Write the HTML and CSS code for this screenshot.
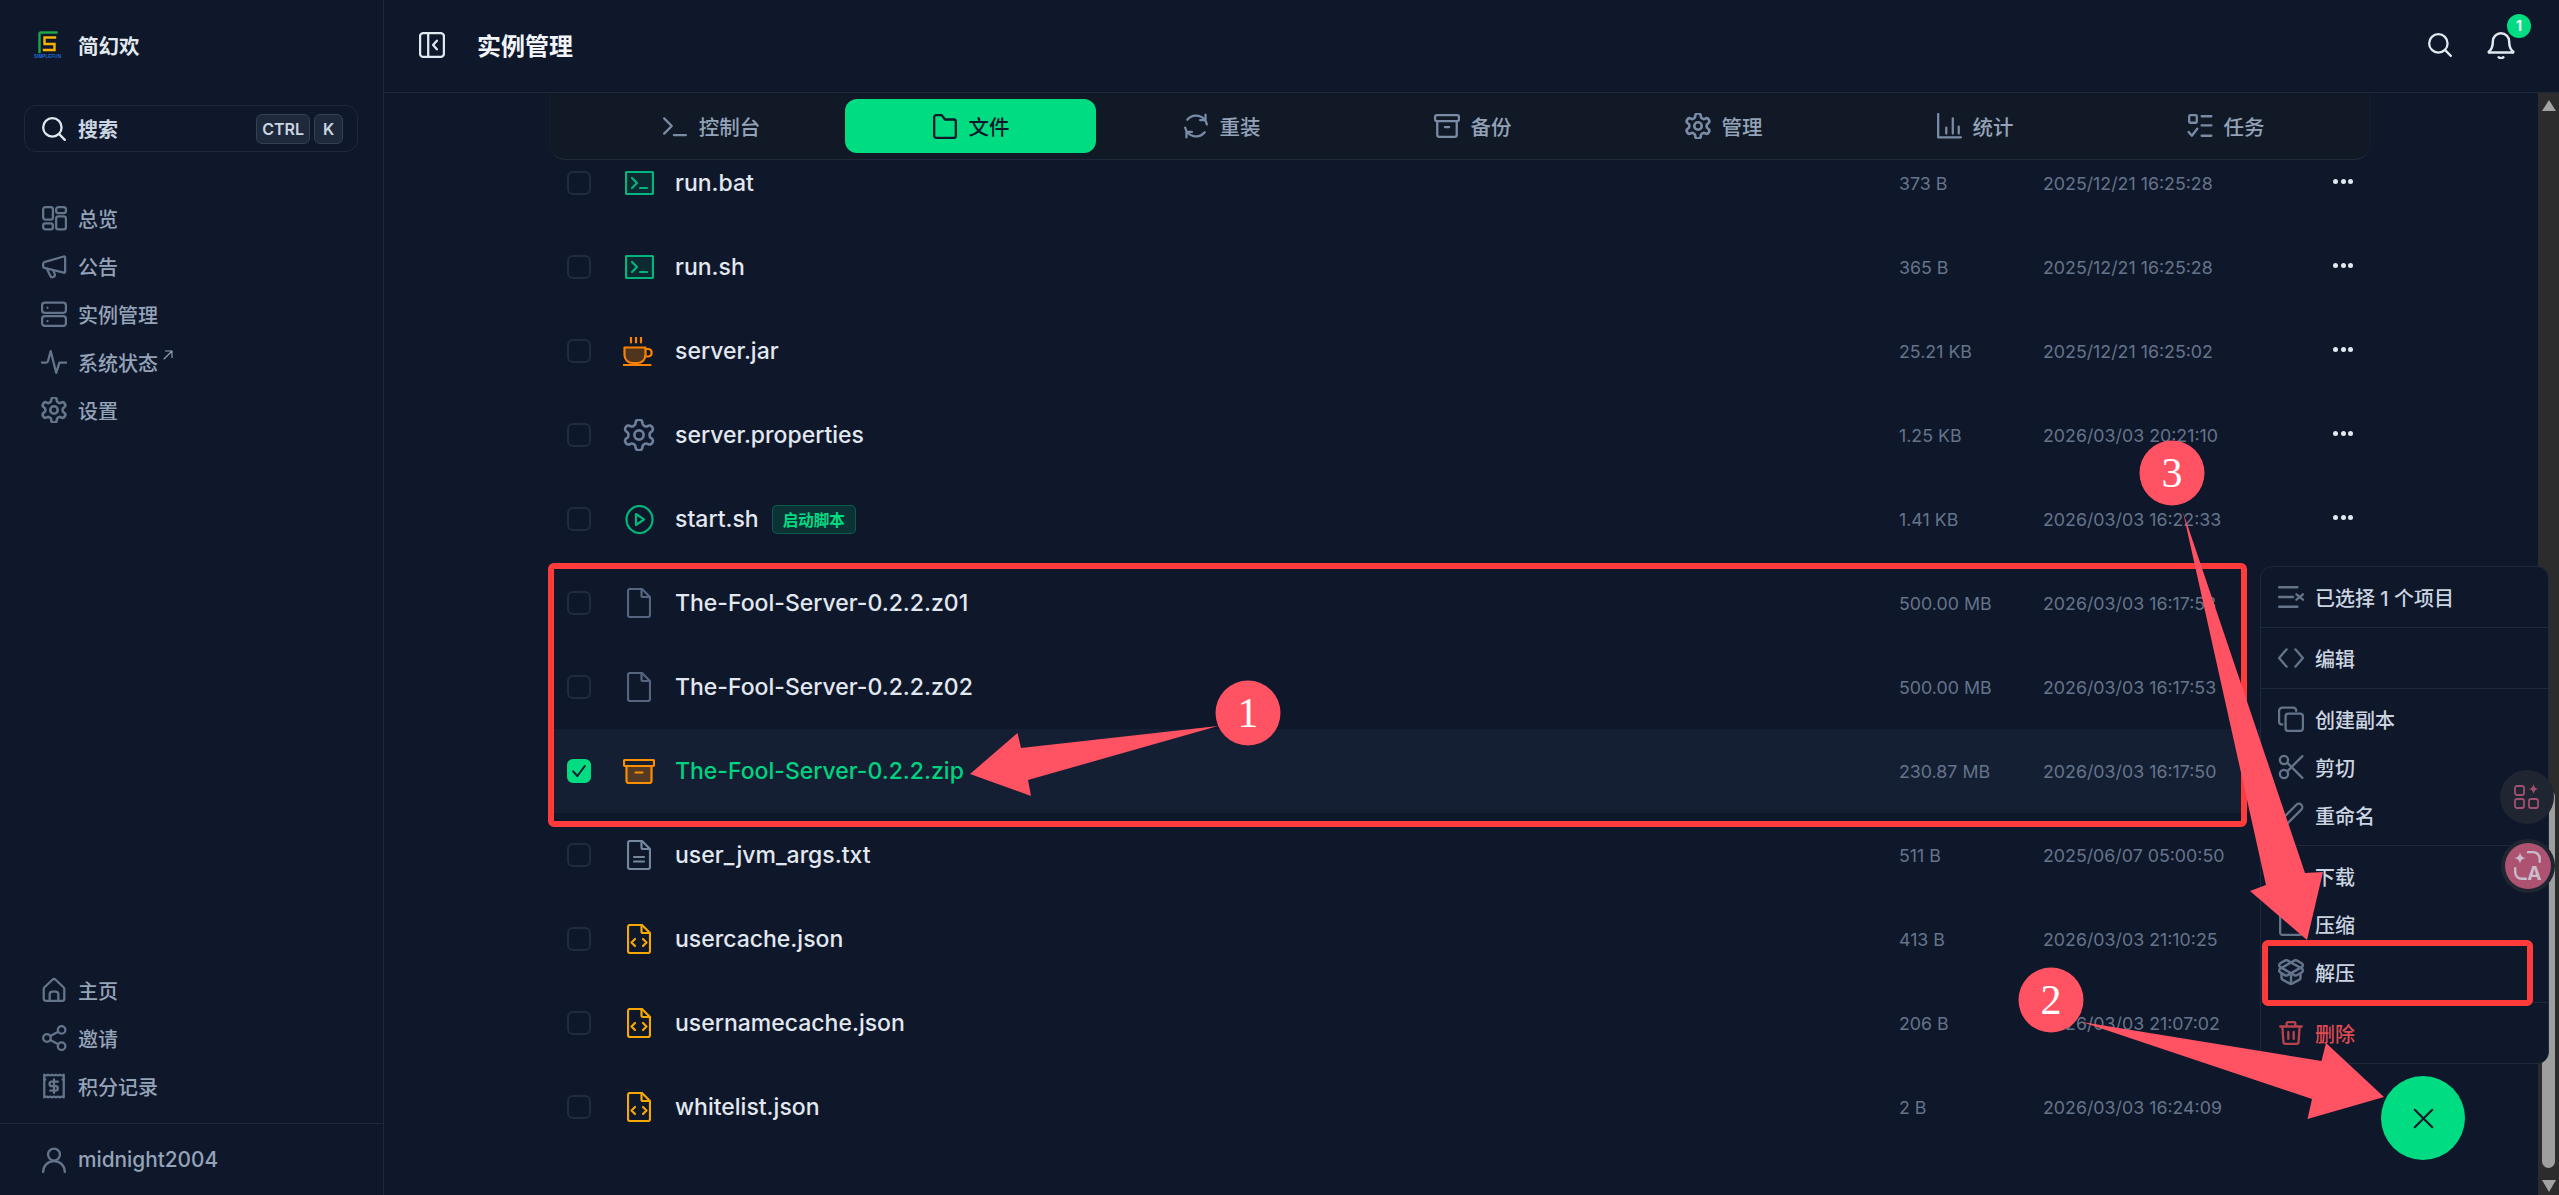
FILE: index.html
```html
<!DOCTYPE html>
<html lang="zh-CN">
<head>
<meta charset="utf-8">
<title>实例管理</title>
<link rel="stylesheet" href="styles.css">
</head>
<body>
<svg class="sprite" aria-hidden="true">
  <symbol id="i-search" viewBox="0 0 24 24"><circle cx="10.5" cy="10.5" r="8.5"/><path d="M17 17l5 5"/></symbol>
  <symbol id="i-dash" viewBox="0 0 24 24"><rect x="2" y="2" width="9" height="11.5" rx="2"/><rect x="2" y="17" width="9" height="5.5" rx="2"/><rect x="14" y="10.5" width="9" height="12" rx="2"/><rect x="14" y="2" width="9" height="5.5" rx="2"/></symbol>
  <symbol id="i-horn" viewBox="0 0 24 24"><path d="M3 8.5L21 3.2a1 1 0 0 1 1.3 1v13a1 1 0 0 1-1.3 1l-18-4.4a1.5 1.5 0 0 1-1-1.4V9.8a1.500 1.500 0 0 1 1-1.300z"/><path d="M5.500 14.500l3 6.500a2.200 2.200 0 0 0 4.100-1.700l-1.300-3.200"/></symbol>
  <symbol id="i-server" viewBox="0 0 24 24"><rect x="1" y="1.500" width="22" height="9.500" rx="2.500"/><rect x="1" y="14" width="22" height="9" rx="2.500"/><path d="M6 6.200v.1M6 18.500v.1"/></symbol>
  <symbol id="i-activity" viewBox="0 0 24 24"><path d="M0.500 12.500h4.500c.8 0 1.200-.5 1.400-1.200L9 2l5 20 3-9.500h6.500"/></symbol>
  <symbol id="i-gear" viewBox="1.600 1.600 20.800 20.800"><path d="M12.220 2h-.44a2 2 0 0 0-2 2v.18a2 2 0 0 1-1 1.730l-.43.25a2 2 0 0 1-2 0l-.15-.08a2 2 0 0 0-2.730.73l-.22.38a2 2 0 0 0 .73 2.730l.15.1a2 2 0 0 1 1 1.720v.51a2 2 0 0 1-1 1.740l-.15.09a2 2 0 0 0-.73 2.730l.22.38a2 2 0 0 0 2.730.73l.15-.08a2 2 0 0 1 2 0l.43.25a2 2 0 0 1 1 1.730V20a2 2 0 0 0 2 2h.44a2 2 0 0 0 2-2v-.18a2 2 0 0 1 1-1.730l.43-.25a2 2 0 0 1 2 0l.15.08a2 2 0 0 0 2.730-.73l.22-.39a2 2 0 0 0-.73-2.730l-.15-.08a2 2 0 0 1-1-1.740v-.5a2 2 0 0 1 1-1.740l.15-.09a2 2 0 0 0 .73-2.730l-.22-.38a2 2 0 0 0-2.730-.73l-.15.08a2 2 0 0 1-2 0l-.43-.25a2 2 0 0 1-1-1.730V4a2 2 0 0 0-2-2z"/><circle cx="12" cy="12" r="3"/></symbol>
  <symbol id="i-home" viewBox="0 0 24 24"><path d="M3.200 9.500l7.300-7a2.200 2.200 0 0 1 3 0l7.300 7a2.500 2.500 0 0 1 .7 1.700V20a2 2 0 0 1-2 2H4.500a2 2 0 0 1-2-2v-8.800a2.500 2.500 0 0 1 .7-1.700z"/><path d="M8 22v-6a2.500 2.500 0 0 1 2.500-2.500h3A2.500 2.500 0 0 1 16 16v6"/></symbol>
  <symbol id="i-share" viewBox="0 0 24 24"><circle cx="5.500" cy="12" r="3.500"/><circle cx="19" cy="4.500" r="3.500"/><circle cx="19" cy="19.500" r="3.500"/><path d="M8.500 10.200L16 6.200M8.500 13.800l7.500 4"/></symbol>
  <symbol id="i-receipt" viewBox="0 0 24 24"><path d="M3 1.500c1.500 1 2.500 1 3.600 0 1.200 1 2.400 1 3.600 0 1.200 1 2.400 1 3.600 0 1.200 1 2.400 1 3.600 0 1.200 1 2.400 1 3.600 0v21c-1.200-1-2.400-1-3.600 0-1.200-1-2.400-1-3.600 0-1.200-1-2.400-1-3.600 0-1.200-1-2.400-1-3.600 0-1.100-1-2.100-1-3.600 0z"/><path d="M3 6h1M20 6h1M15.500 8H10a2 2 0 0 0 0 4.200h3.500a2 2 0 0 1 0 4H8.500M12 6v12.500"/></symbol>
  <symbol id="i-user" viewBox="0 0 24 24"><circle cx="12" cy="7" r="5.500"/><path d="M2 23c0-6 4.500-10 10-10s10 4 10 10"/></symbol>
  <symbol id="i-collapse" viewBox="0 0 24 24"><rect x="1" y="1" width="22" height="22" rx="3"/><path d="M8.500 1v22M16.500 8l-3.500 4 3.500 4"/></symbol>
  <symbol id="i-bell" viewBox="0 0 24 24"><path d="M12 2a7 7 0 0 0-7 7c0 5-1.500 7.200-3.200 8.500a.5.5 0 0 0 .3 1h19.800a.5.5 0 0 0 .3-1C20.500 16.200 19 14 19 9a7 7 0 0 0-7-7z"/><path d="M10 22.500c1 .8 3 .8 4 0"/></symbol>
  <symbol id="i-term" viewBox="0 0 24 24"><path d="M2 5l7 7-7 7M11 20.500h11"/></symbol>
  <symbol id="i-folder" viewBox="0 0 24 24"><path d="M4 2h5l3 4h8a2 2 0 0 1 2 2v13a2 2 0 0 1-2 2H4a2 2 0 0 1-2-2V4a2 2 0 0 1 2-2z"/></symbol>
  <symbol id="i-refresh" viewBox="0 0 24 24"><path d="M22 10.500A10.300 10.300 0 0 0 4 6.200M20.800 1.500v5h-5"/><path d="M2 13.500A10.300 10.300 0 0 0 20 17.800M3.200 22.500v-5h5"/></symbol>
  <symbol id="i-box" viewBox="0 0 24 24"><rect x="1" y="2" width="22" height="5.500" rx="1.500"/><path d="M3 7.500V20a2 2 0 0 0 2 2h14a2 2 0 0 0 2-2V7.500M10 13h4"/></symbol>
  <symbol id="i-chart" viewBox="0 0 24 24"><path d="M2 1v21.500h21M9.500 13.500v5.500M15.500 5v14M21 12.500v6.500"/></symbol>
  <symbol id="i-tasks" viewBox="0 0 24 24"><rect x="2" y="2" width="7" height="7" rx="1"/><path d="M1.500 17.500l3 3.500 5-6.500M13.500 3h9M13.500 11.500h9M13.500 21h9"/></symbol>
  <symbol id="i-listx" viewBox="0 0 24 24"><path d="M1 3h17M1 12h13M1 21h17M17 9.500l6 5M23 9.500l-6 5"/></symbol>
  <symbol id="i-code" viewBox="0 0 24 24"><path d="M8 4l-7 8 7 8M16 4l7 8-7 8"/></symbol>
  <symbol id="i-copy" viewBox="0 0 24 24"><rect x="7" y="7" width="16" height="16" rx="2.500"/><path d="M4 17a2.500 2.500 0 0 1-3-2.500v-10A3 3 0 0 1 4 1.500h10a2.800 2.800 0 0 1 2.800 3"/></symbol>
  <symbol id="i-cut" viewBox="0 0 24 24"><circle cx="5.500" cy="5.500" r="3.800"/><circle cx="5.500" cy="18.500" r="3.800"/><path d="M8.500 8l14 14M8.500 16l14-14"/></symbol>
  <symbol id="i-pen" viewBox="0 0 24 24"><path d="M2 22l1.500-6L17 2.500a3 3 0 0 1 4.500 4.500L8 20.500z"/></symbol>
  <symbol id="i-down" viewBox="0 0 24 24"><path d="M2 16v4a2 2 0 0 0 2 2h16a2 2 0 0 0 2-2v-4M12 2v14M6 11l6 6 6-6"/></symbol>
  <symbol id="i-zip" viewBox="0 0 24 24"><rect x="2" y="2" width="20" height="20" rx="2"/></symbol>
  <symbol id="i-open" viewBox="1 1 22 22"><path d="M12 22v-9"/><path d="M15.170 2.210a1.670 1.670 0 0 1 1.630 0L21 4.570a1.930 1.930 0 0 1 0 3.360L8.820 14.790a1.655 1.655 0 0 1-1.640 0L3 12.430a1.930 1.930 0 0 1 0-3.360z"/><path d="M20 13v3.870a2.060 2.060 0 0 1-1.110 1.830l-6 3.080a1.930 1.930 0 0 1-1.780 0l-6-3.080A2.060 2.060 0 0 1 4 16.870V13"/><path d="M21 12.430a1.930 1.930 0 0 0 0-3.360L8.830 2.200a1.640 1.640 0 0 0-1.630 0L3 4.570a1.930 1.930 0 0 0 0 3.360l12.180 6.860a1.636 1.636 0 0 0 1.630 0z"/></symbol>
  <symbol id="i-trash" viewBox="0 0 24 24"><path d="M2 6h20M9.500 11v6.500M14.500 11v6.500M4 6l1 14a2 2 0 0 0 2 2h10a2 2 0 0 0 2-2l1-14M8 6V3a1 1 0 0 1 1-1h6a1 1 0 0 1 1 1v3"/></symbol>
  <symbol id="f-term" viewBox="0 0 29 24"><rect class="f-tint" x="1" y="1" width="27" height="22" rx="1"/><path d="M7 7l5 5-5 5M15 17h7"/></symbol>
  <symbol id="f-doc" viewBox="0 0 24 30"><path d="M3 1h12l8 8v18a2 2 0 0 1-2 2H3a2 2 0 0 1-2-2V3a2 2 0 0 1 2-2z"/><path d="M14.500 1.500v6a1.500 1.500 0 0 0 1.500 1.500h6.500"/></symbol>
  <symbol id="f-txt" viewBox="0 0 24 30"><path d="M3 1h12l8 8v18a2 2 0 0 1-2 2H3a2 2 0 0 1-2-2V3a2 2 0 0 1 2-2z"/><path d="M14.500 1.500v6a1.500 1.500 0 0 0 1.500 1.500h6.500M7 17h10M7 21.500h10"/></symbol>
  <symbol id="f-json" viewBox="0 0 24 30"><path d="M3 1h12l8 8v18a2 2 0 0 1-2 2H3a2 2 0 0 1-2-2V3a2 2 0 0 1 2-2z"/><path d="M14.500 1.500v6a1.500 1.500 0 0 0 1.500 1.500h6.500M8 15l-3.500 3.500L8 22M16 15l3.500 3.500L16 22"/></symbol>
  <symbol id="f-cup" viewBox="0 0 32 29"><path class="f-fill" d="M1.500 10.500h21v7.500a8 8 0 0 1-8 8h-5a8 8 0 0 1-8-8z"/><path d="M22.500 12h3a3.800 3.800 0 0 1 0 7.500h-3.500M0 28h27.500M8 0v5.500M13 0v5.500M18 0v5.500"/></symbol>
  <symbol id="f-play" viewBox="0 0 29 29"><ellipse cx="14.500" cy="14.500" rx="13" ry="13.500"/><path d="M11 9l8 5.500-8 5.500z"/></symbol>
  <symbol id="f-arch" viewBox="0 0 32 25"><rect x="1" y="1" width="30" height="6" rx="1"/><path class="f-fill" d="M3.500 7v15a2 2 0 0 0 2 2h21a2 2 0 0 0 2-2V7z"/><path d="M12.500 13.500h7"/></symbol>
</svg>

<div class="app">
  <aside class="sidebar">
    <div class="brand">
      <svg class="logo" viewBox="0 0 27 27" aria-hidden="true">
        <path class="logo-g" d="M5.500 21V3a1.500 1.500 0 0 1 1.500-1.500h15.500"/>
        <path class="logo-y" d="M21 6.500H10.500v6.500h10v6H10"/>
        <text class="logo-t" x="13.500" y="26.800" textLength="27">SIMPLEFUN</text>
      </svg>
      <span class="brand-name">简幻欢</span>
    </div>
    <div class="search">
      <svg class="ic"><use href="#i-search"/></svg>
      <span class="search-label">搜索</span>
      <kbd class="key">CTRL</kbd><kbd class="key">K</kbd>
    </div>
    <nav class="nav nav-top">
      <a class="nav-item"><svg class="ic"><use href="#i-dash"/></svg><span>总览</span></a>
      <a class="nav-item"><svg class="ic"><use href="#i-horn"/></svg><span>公告</span></a>
      <a class="nav-item"><svg class="ic"><use href="#i-server"/></svg><span>实例管理</span></a>
      <a class="nav-item"><svg class="ic"><use href="#i-activity"/></svg><span>系统状态</span><svg class="ext" viewBox="0 0 10 10"><path d="M1 9l8-8M2.500 1H9v6.500"/></svg></a>
      <a class="nav-item"><svg class="ic"><use href="#i-gear"/></svg><span>设置</span></a>
    </nav>
    <nav class="nav nav-bottom">
      <a class="nav-item"><svg class="ic"><use href="#i-home"/></svg><span>主页</span></a>
      <a class="nav-item"><svg class="ic"><use href="#i-share"/></svg><span>邀请</span></a>
      <a class="nav-item"><svg class="ic"><use href="#i-receipt"/></svg><span>积分记录</span></a>
    </nav>
    <div class="account"><svg class="ic"><use href="#i-user"/></svg><span>midnight2004</span></div>
  </aside>

  <main class="main">
    <header class="topbar">
      <svg class="ic ic-light"><use href="#i-collapse"/></svg>
      <h1 class="page-title">实例管理</h1>
      <div class="top-actions">
        <svg class="ic ic-light"><use href="#i-search"/></svg>
        <span class="bell"><svg class="ic ic-light"><use href="#i-bell"/></svg><b class="bell-badge">1</b></span>
      </div>
    </header>
    <div class="body">
      <section class="content">
        <div class="tabs">
          <a class="tab tab-first"><svg class="ic"><use href="#i-term"/></svg>控制台</a>
          <a class="tab tab-active"><svg class="ic"><use href="#i-folder"/></svg>文件</a>
          <a class="tab"><svg class="ic"><use href="#i-refresh"/></svg>重装</a>
          <a class="tab"><svg class="ic"><use href="#i-box"/></svg>备份</a>
          <a class="tab"><svg class="ic"><use href="#i-gear"/></svg>管理</a>
          <a class="tab"><svg class="ic"><use href="#i-chart"/></svg>统计</a>
          <a class="tab"><svg class="ic"><use href="#i-tasks"/></svg>任务</a>
        </div>
        <div class="files">
          <div class="row"><i class="check"></i><span class="ficon"><svg class="fi fi-term"><use href="#f-term"/></svg></span><span class="name">run.bat</span><span class="size">373 B</span><span class="date">2025/12/21 16:25:28</span><span class="dots"><i></i><i></i><i></i></span></div>
          <div class="row"><i class="check"></i><span class="ficon"><svg class="fi fi-term"><use href="#f-term"/></svg></span><span class="name">run.sh</span><span class="size">365 B</span><span class="date">2025/12/21 16:25:28</span><span class="dots"><i></i><i></i><i></i></span></div>
          <div class="row"><i class="check"></i><span class="ficon"><svg class="fi fi-cup"><use href="#f-cup"/></svg></span><span class="name">server.jar</span><span class="size">25.21 KB</span><span class="date">2025/12/21 16:25:02</span><span class="dots"><i></i><i></i><i></i></span></div>
          <div class="row"><i class="check"></i><span class="ficon"><svg class="fi fi-gear"><use href="#i-gear"/></svg></span><span class="name">server.properties</span><span class="size">1.25 KB</span><span class="date">2026/03/03 20:21:10</span><span class="dots"><i></i><i></i><i></i></span></div>
          <div class="row"><i class="check"></i><span class="ficon"><svg class="fi fi-play"><use href="#f-play"/></svg></span><span class="name">start.sh</span><em class="badge">启动脚本</em><span class="size">1.41 KB</span><span class="date">2026/03/03 16:22:33</span><span class="dots"><i></i><i></i><i></i></span></div>
          <div class="row"><i class="check"></i><span class="ficon"><svg class="fi fi-doc"><use href="#f-doc"/></svg></span><span class="name">The-Fool-Server-0.2.2.z01</span><span class="size">500.00 MB</span><span class="date">2026/03/03 16:17:53</span></div>
          <div class="row"><i class="check"></i><span class="ficon"><svg class="fi fi-doc"><use href="#f-doc"/></svg></span><span class="name">The-Fool-Server-0.2.2.z02</span><span class="size">500.00 MB</span><span class="date">2026/03/03 16:17:53</span></div>
          <div class="row row-selected"><i class="check check-on"><svg viewBox="0 0 24 24"><path d="M5 12.500l5 5.500 9-12"/></svg></i><span class="ficon"><svg class="fi fi-arch"><use href="#f-arch"/></svg></span><span class="name">The-Fool-Server-0.2.2.zip</span><span class="size">230.87 MB</span><span class="date">2026/03/03 16:17:50</span></div>
          <div class="row"><i class="check"></i><span class="ficon"><svg class="fi fi-txt"><use href="#f-txt"/></svg></span><span class="name">user_jvm_args.txt</span><span class="size">511 B</span><span class="date">2025/06/07 05:00:50</span></div>
          <div class="row"><i class="check"></i><span class="ficon"><svg class="fi fi-json"><use href="#f-json"/></svg></span><span class="name">usercache.json</span><span class="size">413 B</span><span class="date">2026/03/03 21:10:25</span></div>
          <div class="row"><i class="check"></i><span class="ficon"><svg class="fi fi-json"><use href="#f-json"/></svg></span><span class="name">usernamecache.json</span><span class="size">206 B</span><span class="date">2026/03/03 21:07:02</span></div>
          <div class="row"><i class="check"></i><span class="ficon"><svg class="fi fi-json"><use href="#f-json"/></svg></span><span class="name">whitelist.json</span><span class="size">2 B</span><span class="date">2026/03/03 16:24:09</span></div>
        </div>
      </section>
      <div class="scrollbar">
        <i class="sb-up"></i>
        <i class="sb-thumb"></i>
        <i class="sb-down"></i>
      </div>
    </div>
  </main>
</div>

<div class="menu">
  <div class="menu-group"><div class="menu-item"><svg class="ic"><use href="#i-listx"/></svg>已选择 1 个项目</div></div>
  <div class="menu-group"><div class="menu-item"><svg class="ic"><use href="#i-code"/></svg>编辑</div></div>
  <div class="menu-group">
    <div class="menu-item"><svg class="ic"><use href="#i-copy"/></svg>创建副本</div>
    <div class="menu-item"><svg class="ic"><use href="#i-cut"/></svg>剪切</div>
    <div class="menu-item"><svg class="ic"><use href="#i-pen"/></svg>重命名</div>
  </div>
  <div class="menu-group">
    <div class="menu-item"><svg class="ic"><use href="#i-down"/></svg>下载</div>
    <div class="menu-item"><svg class="ic"><use href="#i-zip"/></svg>压缩</div>
    <div class="menu-item"><svg class="ic"><use href="#i-open"/></svg>解压</div>
  </div>
  <div class="menu-group"><div class="menu-item menu-danger"><svg class="ic"><use href="#i-trash"/></svg>删除</div></div>
</div>

<div class="widget widget-apps">
  <svg viewBox="0 0 26 26"><rect x="1" y="2" width="9" height="9" rx="2"/><rect x="1" y="15" width="9" height="9" rx="2"/><rect x="15" y="15" width="9" height="9" rx="2"/><path class="spark" d="M19.500 0c.6 3 1.900 4.400 5 5-3.100.6-4.400 2-5 5-.6-3-1.900-4.400-5-5 3.100-.6 4.400-2 5-5z"/></svg>
</div>
<div class="widget widget-translate">
  <span class="translate-disc">
    <svg viewBox="0 0 32 32"><path class="spark2" d="M8.500 3c.7 3.500 2 4.800 5.500 5.500-3.500.7-4.800 2-5.500 5.500C7.800 10.500 6.500 9.200 3 8.500 6.500 7.800 7.800 6.500 8.500 3z"/><path d="M16 3h5a6 6 0 0 1 6 6v3M4 18v4a6 6 0 0 0 6 6h4"/><text x="22" y="29">A</text></svg>
  </span>
</div>

<button class="fab" type="button" aria-label="关闭"><svg viewBox="0 0 24 24"><path d="M2 2l20 20M22 2L2 22"/></svg></button>

<svg class="marks" viewBox="0 0 2559 1195" aria-hidden="true">
  <rect class="mark-box" x="551" y="566" width="1693" height="258" rx="3"/>
  <rect class="mark-box" x="2265" y="943" width="265" height="60" rx="3"/>
  <polygon class="mark-fill" points="1218,726 1021,748 1017.500,733 970,774 1031,796 1028,780"/>
  <polygon class="mark-fill" points="2183,512 2266,885 2250,891 2307,940 2323,872 2305,873"/>
  <polygon class="mark-fill" points="2082,1022 2321.500,1061 2326,1043 2384,1097 2307.500,1119 2312,1099"/>
  <circle class="mark-fill" cx="1248" cy="713" r="32.500"/>
  <circle class="mark-fill" cx="2172" cy="473" r="32.500"/>
  <circle class="mark-fill" cx="2051" cy="1000" r="32.500"/>
  <text class="mark-num" x="1248" y="727">1</text>
  <text class="mark-num" x="2172" y="487">3</text>
  <text class="mark-num" x="2051" y="1014">2</text>
</svg>
</body>
</html>
```
FILE: styles.css
```css
* { box-sizing: border-box; }
html, body { margin: 0; height: 100%; }
body {
  width: 2559px;
  height: 1195px;
  overflow: hidden;
  position: relative;
  background: #0f172a;
  color: #e2e8f0;
  font-family: Inter, "Noto Sans CJK SC", sans-serif;
  font-size: 20px;
}
.sprite { display: none; }
svg { fill: none; stroke: currentColor; stroke-linecap: round; stroke-linejoin: round; }
.ic { width: 26px; height: 26px; flex: none; stroke-width: 2.1; }
.ic-light { color: #e2e8f0; }

.app { display: flex; height: 1195px; }

/* sidebar */
.sidebar {
  width: 384px;
  flex: none;
  display: flex;
  flex-direction: column;
  border-right: 1px solid #1e293b;
}
.brand { height: 92px; flex: none; display: flex; align-items: center; gap: 17px; padding: 0 0 3px 34px; }
.logo { width: 27px; height: 27px; overflow: visible; stroke-width: 2.4; margin-top: -1px; }
.logo-g { stroke: #1fa64a; stroke-linecap: square; stroke-linejoin: miter; }
.logo-y { stroke: #f7b500; stroke-linecap: square; stroke-linejoin: miter; }
.logo-t { fill: #1f6fd6; stroke: none; font: 700 4.600px "Liberation Sans", sans-serif; text-anchor: middle; }
.brand-name { font-weight: 700; font-size: 20.500px; color: #e2e8f0; }

.search {
  margin: 13px 25px 0 24px;
  height: 47px;
  flex: none;
  display: flex;
  align-items: center;
  padding: 0 14px 0 16px;
  border: 1px solid #1e293b;
  border-radius: 12px;
  color: #e2e8f0;
}
.search-label { margin: 0 auto 0 11px; font-weight: 600; color: #cbd5e1; }
.key {
  height: 30px;
  min-width: 29px;
  margin-left: 4px;
  padding: 0 5px;
  display: flex;
  align-items: center;
  justify-content: center;
  font: 600 16px Inter, sans-serif;
  color: #cbd5e1;
  background: #1e293b;
  border: 1px solid #334155;
  border-radius: 6px;
}

.nav { display: flex; flex-direction: column; }
.nav-top { margin-top: 42px; }
.nav-bottom { margin-top: auto; margin-bottom: 13px; }
.nav-item {
  height: 48px;
  display: flex;
  align-items: center;
  gap: 11px;
  padding-left: 41px;
  color: #94a3b8;
  font-weight: 500;
}
.nav-item .ic, .account .ic { color: #64748b; }
.ext { width: 10px; height: 10px; margin: -14px 0 0 -6px; color: #94a3b8; stroke-width: 1.100; }
.account {
  height: 72px;
  flex: none;
  display: flex;
  align-items: center;
  gap: 11px;
  padding: 0 0 0 41px;
  border-top: 1px solid #1e293b;
  color: #94a3b8;
  font-size: 20.800px;
  font-weight: 500;
}

/* main */
.main { flex: 1; min-width: 0; display: flex; flex-direction: column; }
.topbar {
  height: 93px;
  flex: none;
  display: flex;
  align-items: center;
  padding: 0 44px 3px 35px;
  border-bottom: 1px solid #1e293b;
}
.page-title { margin: 0 0 0 32px; font-size: 24px; font-weight: 700; color: #f1f5f9; }
.top-actions { margin-left: auto; display: flex; align-items: center; gap: 34px; }
.bell { position: relative; display: flex; }
.bell .ic { width: 28px; height: 28px; }
.bell-badge {
  position: absolute;
  right: -16px;
  top: -17px;
  width: 24px;
  height: 24px;
  border-radius: 50%;
  background: #00dc82;
  color: #f8fafc;
  font-size: 14px;
  font-weight: 700;
  display: flex;
  align-items: center;
  justify-content: center;
}

.body { flex: 1; min-height: 0; display: flex; }
.content { flex: 1; min-width: 0; padding: 0 167px 0 165px; }

.tabs {
  position: relative;
  z-index: 2;
  height: 67px;
  display: flex;
  padding: 6px 21px 6px 27px;
  background: #111927;
  border: 1px solid #151e2f;
  border-bottom-color: #1e293b;
  border-top: 0;
  border-radius: 0 0 16px 16px;
}
.tab {
  width: 251px;
  height: 54px;
  flex: none;
  display: flex;
  align-items: center;
  justify-content: center;
  gap: 11px;
  border-radius: 12px;
  color: #94a3b8;
  font-size: 20.500px;
  font-weight: 500;
}
.tab .ic { color: #7a8ba5; }
.tab-first { width: 268px; }
.tab-active { background: #00dc82; color: #0f172a; }
.tab-active .ic { color: #0f172a; }

/* file rows */
.files { margin-top: -19px; }
.row {
  height: 84px;
  display: flex;
  align-items: center;
  padding: 0 18px;
  font-size: 23px;
}
.row-selected { background: #151f33; }
.row-selected .name { color: #00d27f; }
.check {
  width: 24px;
  height: 24px;
  flex: none;
  border: 2px solid #1f2c41;
  border-radius: 6px;
  display: flex;
}
.check-on { background: #00dc82; border-color: #00dc82; color: #0f172a; }
.check-on svg { width: 20px; height: 20px; stroke-width: 2.400; }
.ficon { width: 32px; height: 32px; flex: none; margin: 0 20px 0 32px; display: flex; align-items: center; justify-content: center; }
.fi { stroke-width: 2.200; }
.fi-term { width: 29px; height: 24px; color: #00b67c; }
.f-tint { fill: rgba(0, 220, 130, .1); }
.fi-cup { width: 32px; height: 29px; color: #f98000; overflow: visible; }
.f-fill { fill: rgba(249, 128, 0, .28); }
.fi-arch { width: 32px; height: 25px; color: #f98f00; }
.fi-gear { width: 32px; height: 32px; color: #6d7f9b; stroke-width: 1.700; }
.fi-play { width: 29px; height: 29px; color: #00b67c; }
.fi-doc { width: 24px; height: 30px; color: #55657f; }
.fi-txt { width: 24px; height: 30px; color: #75869f; }
.fi-json { width: 24px; height: 30px; color: #f5a800; }
.name { flex: none; color: #e2e8f0; font-weight: 500; }
.badge {
  margin-left: 13px;
  height: 29px;
  padding: 0 10px;
  display: flex;
  align-items: center;
  font-size: 15.500px;
  font-style: normal;
  font-weight: 700;
  color: #00dc82;
  background: rgba(0, 220, 130, .14);
  border: 1px solid rgba(0, 220, 130, .25);
  border-radius: 5px;
}
.size { width: 144px; flex: none; margin-left: auto; font-size: 17.800px; color: #64748b; }
.date { width: 290px; flex: none; font-size: 17.800px; color: #64748b; }
.date:last-child { width: 310px; }
.dots { width: 20px; flex: none; display: flex; justify-content: space-between; margin-top: -3px; }
.dots i { width: 5px; height: 5px; border-radius: 50%; background: #e2e8f0; }

/* scrollbar */
.scrollbar { width: 21px; flex: none; background: #2c2c2c; display: flex; flex-direction: column; align-items: center; }
.sb-up, .sb-down { width: 0; height: 0; border-left: 7px solid transparent; border-right: 7px solid transparent; }
.sb-up { margin-top: 7px; border-bottom: 11px solid #a3a3a3; }
.sb-down { margin-bottom: 3px; border-top: 12px solid #a3a3a3; }
.sb-thumb { width: 13px; margin-top: auto; margin-bottom: 12px; height: 378px; background: #9f9f9f; border-radius: 7px; }

/* floating menu */
.menu {
  position: absolute;
  left: 2260px;
  top: 566px;
  width: 289px;
  background: #0f172a;
  border: 1px solid #1e293b;
  border-radius: 12px;
}
.menu-group { padding: 6px 0; border-bottom: 1px solid #1e293b; }
.menu-group:last-child { border-bottom: 0; }
.menu-item {
  height: 48px;
  display: flex;
  align-items: center;
  gap: 11px;
  padding-left: 17px;
  color: #cbd5e1;
  font-weight: 500;
}
.menu-item .ic { color: #64748b; }
.menu-danger { color: #dc4a52; }
.menu-danger .ic { color: #b8434c; }

.widget {
  position: absolute;
  width: 54px;
  height: 54px;
  border-radius: 50%;
  background: #1f2631;
  display: flex;
  align-items: center;
  justify-content: center;
}
.widget-apps { left: 2500px; top: 770px; }
.widget-apps svg { width: 26px; height: 26px; color: #a14f6f; stroke-width: 1.800; }
.spark { fill: #a14f6f; stroke: none; }
.widget-translate { left: 2501px; top: 839px; }
.translate-disc {
  width: 46px;
  height: 46px;
  border-radius: 50%;
  background: #ae5272;
  display: flex;
  align-items: center;
  justify-content: center;
}
.translate-disc svg { width: 34px; height: 34px; color: #c9bccb; stroke-width: 2.200; overflow: visible; }
.translate-disc text { fill: #c9bccb; stroke: none; font: 700 18px Inter, sans-serif; text-anchor: middle; }
.spark2 { fill: #c9bccb; stroke: none; }

.fab {
  position: absolute;
  left: 2381px;
  top: 1076px;
  width: 84px;
  height: 84px;
  padding: 0;
  border: 0;
  border-radius: 50%;
  background: #00dc82;
  color: #0f172a;
  display: flex;
  align-items: center;
  justify-content: center;
}
.fab svg { width: 21px; height: 21px; stroke-width: 2.400; }

/* hand-drawn annotation layer */
.marks { position: absolute; left: 0; top: 0; width: 2559px; height: 1195px; pointer-events: none; stroke-linecap: butt; }
.mark-box { fill: none; stroke: #ff3b3b; stroke-width: 6; }
.mark-fill { fill: #ff5263; stroke: none; }
.mark-num { fill: #fff; stroke: none; font: 42px "Liberation Serif", serif; text-anchor: middle; }
```
